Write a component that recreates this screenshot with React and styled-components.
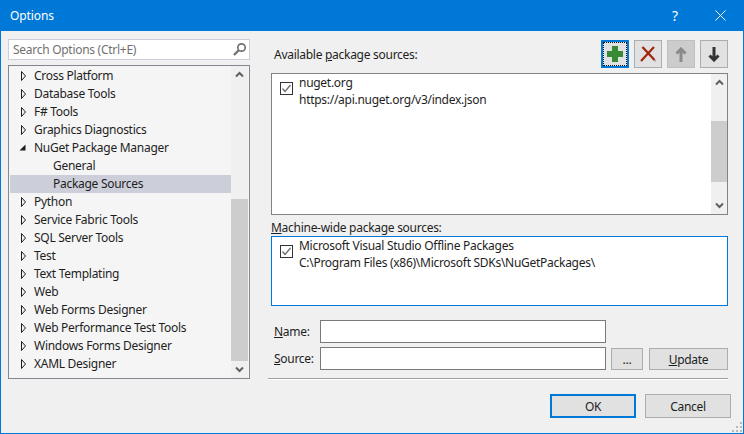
import React from "react";
import styled, { createGlobalStyle } from "styled-components";

const Global = createGlobalStyle`
  html, body { margin: 0; padding: 0; background: #f0f0f0; }
  * { box-sizing: border-box; }
`;

const Shell = styled.div`
  position: relative;
  width: 744px;
  height: 434px;
  border: 1px solid #0078d7;
  border-top: 0;
  background: #f0f0f0;
  display: flex;
  flex-direction: column;
  font-family: "Noto Sans", "Open Sans", sans-serif;
  font-size: 12px;
  letter-spacing: -0.28px;
  color: #1e1e1e;
  overflow: hidden;
`;

const TitleBar = styled.div`
  height: 31px;
  flex: none;
  background: #0078d7;
  color: #fff;
  display: flex;
  align-items: center;
  padding: 0 0 1px 9px;
  margin: 0 -1px;
  font-size: 12px;
  letter-spacing: -0.1px;
`;
const Title = styled.span`
  margin-left: 1px;
  flex: 1;
`;
const TitleHelp = styled.span`
  width: 42px;
  text-align: center;
  font-size: 14px;
`;
const TitleClose = styled.span`
  width: 48px;
  height: 30px;
  display: flex;
  align-items: center;
  justify-content: center;
`;

const Body = styled.div`
  flex: 1;
  display: flex;
  min-height: 0;
`;

const LeftPane = styled.div`
  width: 242px;
  margin-left: 7px;
  padding-top: 8px;
  display: flex;
  flex-direction: column;
  gap: 5px;
`;
const SearchBox = styled.div`
  height: 21px;
  background: #fff;
  border: 1px solid #cccedb;
  display: flex;
  align-items: center;
  justify-content: space-between;
  padding: 0 2px 0 4px;
  color: #717171;
`;
const Tree = styled.div`
  height: 314px;
  border: 1px solid #828790;
  background: #f5f5f5;
  display: flex;
  padding: 0 1px;
`;
const TreeRows = styled.div`
  flex: 1;
  display: flex;
  flex-direction: column;
  padding-top: 1px;
  min-width: 0;
`;
const TreeRow = styled.div`
  height: 18px;
  flex: none;
  display: flex;
  align-items: center;
  padding-left: ${(p) => (p.$child ? 43 : 9)}px;
  background: ${(p) => (p.$selected ? "#ccced9" : "transparent")};
`;
const RowLabel = styled.span`
  position: relative;
  top: -1px;
`;
const ArrowSlot = styled.span`
  width: 15px;
  height: 18px;
  flex: none;
  display: flex;
  align-items: center;
`;

const Scrollbar = styled.div`
  width: ${(p) => p.$w}px;
  flex: none;
  display: flex;
  flex-direction: column;
  background: #f0f0f0;
`;
const ScrollEnd = styled.div`
  height: 17px;
  flex: none;
  display: flex;
  align-items: center;
  justify-content: center;
`;
const ScrollTrack = styled.div`
  flex: 1;
  min-height: 0;
  padding-top: ${(p) => p.$top}px;
`;
const Thumb = styled.div`
  height: ${(p) => p.$h}px;
  background: #cdcdcd;
`;

const RightPane = styled.div`
  width: 463px;
  margin-left: 18px;
  padding-top: 9px;
  display: flex;
  flex-direction: column;
`;
const Inset = styled.div`
  padding: 0 3px;
  display: flex;
  flex-direction: column;
`;
const HeaderRow = styled.div`
  height: 28px;
  display: flex;
  align-items: center;
  justify-content: space-between;
  padding-left: 3px;
  margin-bottom: 5px;
`;
const IconButtons = styled.div`
  display: flex;
  gap: 5px;
`;
const IconBtn = styled.div`
  position: relative;
  width: 28px;
  height: 28px;
  display: flex;
  align-items: center;
  justify-content: center;
  background: ${(p) => (p.$disabled ? "#cccccc" : "#e1e1e1")};
  border: ${(p) =>
    p.$focused
      ? "2px solid #0078d7"
      : p.$disabled
      ? "1px solid #bfbfbf"
      : "1px solid #adadad"};
`;
const FocusDots = styled.span`
  position: absolute;
  inset: 0;
  border: 1px dotted #111;
`;
const ListBox = styled.div`
  height: ${(p) => p.$h}px;
  background: #fff;
  border: 1px solid ${(p) => (p.$active ? "#0078d7" : "#828282")};
  display: flex;
`;
const SourceRow = styled.div`
  flex: 1;
  display: flex;
  gap: 6px;
  padding-left: 8px;
  line-height: 17px;
`;
const Check = styled.span`
  width: 13px;
  height: 13px;
  flex: none;
  margin-top: 8px;
  border: 1px solid #333;
  background: #fff;
  display: flex;
  align-items: center;
  justify-content: center;
`;
const SourceText = styled.div`
  display: flex;
  flex-direction: column;
`;
const SectionLabel = styled.div`
  height: 21px;
  display: flex;
  align-items: center;
  padding-top: 3px;
`;

const Form = styled.div`
  margin-top: 14px;
  display: grid;
  grid-template-columns: 286px 32px 80px;
  column-gap: 5px;
  row-gap: 4px;
  padding-left: 49px;
  position: relative;
`;
const FormRow = styled.div`
  display: contents;
`;
const FieldLabel = styled.label`
  position: absolute;
  left: 3px;
  top: ${(p) => p.$row * 27}px;
  height: 23px;
  display: flex;
  align-items: center;
`;
const Field = styled.div`
  height: 23px;
  background: #fff;
  border: 1px solid #7a7a7a;
`;
const PushBtn = styled.div`
  height: ${(p) => p.$h || 22}px;
  margin-left: ${(p) => p.$ml || 0}px;
  align-self: end;
  display: flex;
  align-items: center;
  justify-content: center;
  background: #e1e1e1;
  border: ${(p) => (p.$default ? "2px solid #0078d7" : "1px solid #adadad")};
`;
const Separator = styled.div`
  height: 2px;
  margin-top: 8px;
  margin-right: 3px;
  background: #a0a0a0;
  border-bottom: 1px solid #fff;
`;
const Footer = styled.div`
  margin-top: 14px;
  display: grid;
  grid-template-columns: 86px 86px;
  column-gap: 9px;
  justify-content: end;
`;
const Grip = styled.svg`
  position: absolute;
  right: 0;
  bottom: 0;
`;

const treeTop = [
  "Cross Platform",
  "Database Tools",
  "F# Tools",
  "Graphics Diagnostics",
];
const treeBottom = [
  "Python",
  "Service Fabric Tools",
  "SQL Server Tools",
  "Test",
  "Text Templating",
  "Web",
  "Web Forms Designer",
  "Web Performance Test Tools",
  "Windows Forms Designer",
  "XAML Designer",
];

const Hollow = () => (
  <svg width="8" height="12" viewBox="0 0 8 12">
    <path d="M2.5 1.5 L6.5 6 L2.5 10.5 Z" fill="none" stroke="#1e1e1e" strokeWidth="1" />
  </svg>
);
const Open = () => (
  <svg width="8" height="12" viewBox="0 0 8 12">
    <path d="M0.5 8.5 L6.5 8.5 L6.5 2.5 Z" fill="#1e1e1e" />
  </svg>
);
const ChevUp = () => (
  <svg width="9" height="7" viewBox="0 0 9 7">
    <path d="M1 5.5 L4.5 2 L8 5.5" fill="none" stroke="#606060" strokeWidth="2" />
  </svg>
);
const ChevDown = () => (
  <svg width="9" height="7" viewBox="0 0 9 7">
    <path d="M1 1.5 L4.5 5 L8 1.5" fill="none" stroke="#606060" strokeWidth="2" />
  </svg>
);
const Tick = () => (
  <svg width="11" height="11" viewBox="0 0 11 11">
    <path d="M1.5 5.5 L4 8.5 L9.5 2" fill="none" stroke="#6a6a6a" strokeWidth="1.3" />
  </svg>
);
const Item = ({ label }) => (
  <TreeRow>
    <ArrowSlot><Hollow /></ArrowSlot>
    <RowLabel>{label}</RowLabel>
  </TreeRow>
);
const Source = ({ name, url }) => (
  <SourceRow>
    <Check><Tick /></Check>
    <SourceText>
      <span>{name}</span>
      <span>{url}</span>
    </SourceText>
  </SourceRow>
);

export default function App() {
  return (
    <Shell>
      <Global />
      <TitleBar>
        <Title>Options</Title>
        <TitleHelp>?</TitleHelp>
        <TitleClose>
          <svg width="11" height="11" viewBox="0 0 11 11">
            <path d="M0.5 0.5 L10.5 10.5 M10.5 0.5 L0.5 10.5" stroke="#fff" strokeWidth="1" />
          </svg>
        </TitleClose>
      </TitleBar>
      <Body>
        <LeftPane>
          <SearchBox>
            <span>Search Options (Ctrl+E)</span>
            <svg width="15" height="15" viewBox="0 0 15 15">
              <circle cx="9.5" cy="5.5" r="3.7" fill="none" stroke="#717171" strokeWidth="1.7" />
              <path d="M6.5 8.5 L2 13" stroke="#717171" strokeWidth="2.4" />
            </svg>
          </SearchBox>
          <Tree>
            <TreeRows>
              {treeTop.map((t) => <Item key={t} label={t} />)}
              <TreeRow>
                <ArrowSlot><Open /></ArrowSlot>
                <RowLabel>NuGet Package Manager</RowLabel>
              </TreeRow>
              <TreeRow $child><RowLabel>General</RowLabel></TreeRow>
              <TreeRow $child $selected><RowLabel>Package Sources</RowLabel></TreeRow>
              {treeBottom.map((t) => <Item key={t} label={t} />)}
            </TreeRows>
            <Scrollbar $w={17}>
              <ScrollEnd><ChevUp /></ScrollEnd>
              <ScrollTrack $top={116}><Thumb $h={162} /></ScrollTrack>
              <ScrollEnd><ChevDown /></ScrollEnd>
            </Scrollbar>
          </Tree>
        </LeftPane>
        <RightPane>
          <Inset>
            <HeaderRow>
              <span>Available <u>p</u>ackage sources:</span>
              <IconButtons>
                <IconBtn $focused>
                  <FocusDots />
                  <svg width="16" height="16" viewBox="0 0 16 16">
                    <path d="M5 0 H11 V5 H16 V11 H11 V16 H5 V11 H0 V5 H5 Z" fill="#388a34" />
                  </svg>
                </IconBtn>
                <IconBtn>
                  <svg width="16" height="16" viewBox="0 0 16 16">
                    <path d="M2 1 L16 15.5" stroke="#9a9a9a" strokeWidth="1.2" />
                    <path d="M14 1 L1 15 M2.5 1 L14.5 14" stroke="#a1260d" strokeWidth="2.2" />
                  </svg>
                </IconBtn>
                <IconBtn $disabled>
                  <svg width="12" height="15" viewBox="0 0 12 15">
                    <path d="M6 2 V15 M1.5 6.5 L6 2 L10.5 6.5" fill="none" stroke="#8a8a8a" strokeWidth="3" />
                  </svg>
                </IconBtn>
                <IconBtn>
                  <svg width="12" height="15" viewBox="0 0 12 15">
                    <path d="M6 0 V13 M1.5 8.5 L6 13 L10.5 8.5" fill="none" stroke="#333" strokeWidth="3" />
                  </svg>
                </IconBtn>
              </IconButtons>
            </HeaderRow>
            <ListBox $h={142}>
              <Source name="nuget.org" url="https://api.nuget.org/v3/index.json" />
              <Scrollbar $w={16}>
                <ScrollEnd><ChevUp /></ScrollEnd>
                <ScrollTrack $top={30}><Thumb $h={61} /></ScrollTrack>
                <ScrollEnd><ChevDown /></ScrollEnd>
              </Scrollbar>
            </ListBox>
            <SectionLabel><span><u>M</u>achine-wide package sources:</span></SectionLabel>
            <ListBox $h={70} $active>
              <Source
                name="Microsoft Visual Studio Offline Packages"
                url="C:\Program Files (x86)\Microsoft SDKs\NuGetPackages\"
              />
            </ListBox>
            <Form>
              <FieldLabel $row={0}><span><u>N</u>ame:</span></FieldLabel>
              <FieldLabel $row={1}><span><u>S</u>ource:</span></FieldLabel>
              <FormRow>
                <Field />
                <span />
                <span />
              </FormRow>
              <FormRow>
                <Field />
                <PushBtn>...</PushBtn>
                <PushBtn $ml={1}><span><u>U</u>pdate</span></PushBtn>
              </FormRow>
            </Form>
          </Inset>
          <Separator />
          <Footer>
            <PushBtn $default $h={24}>OK</PushBtn>
            <PushBtn $h={24}>Cancel</PushBtn>
          </Footer>
        </RightPane>
      </Body>
      <Grip width="12" height="12" viewBox="0 0 12 12">
        <path d="M9 1h2v2H9z M5 5h2v2H5z M9 5h2v2H9z M1 9h2v2H1z M5 9h2v2H5z M9 9h2v2H9z" fill="#b8b8b8" />
      </Grip>
    </Shell>
  );
}
